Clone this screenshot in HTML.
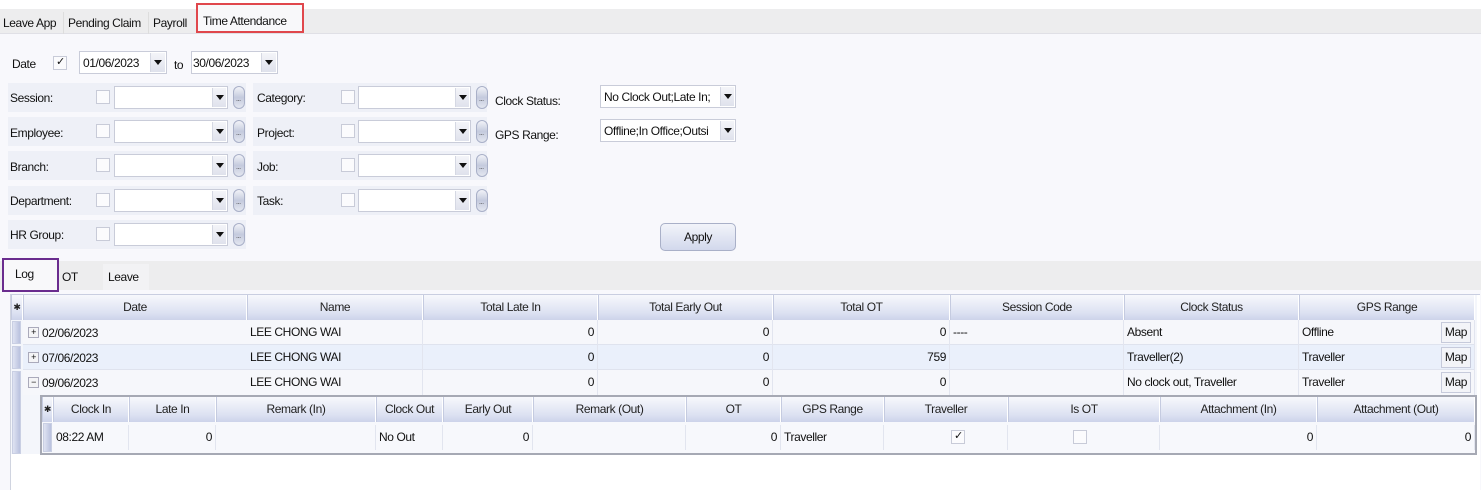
<!DOCTYPE html>
<html><head><meta charset="utf-8"><style>
*{box-sizing:border-box;margin:0;padding:0}
body{width:1481px;height:490px;background:#f8f8fc;font-family:"Liberation Sans",sans-serif;font-size:12px;color:#111;position:relative;overflow:hidden;letter-spacing:-0.4px}
.a{position:absolute;white-space:nowrap}
.band{position:absolute;background:#eef0f7}
.cb{position:absolute;width:14px;height:14px;border:1px solid #c8cbd8;background:#fbfbfd}
.combo{position:absolute;height:23px;border:1px solid #c9ccd9;background:#fff}
.arr{position:absolute;right:1px;top:1px;bottom:1px;width:14px;background:linear-gradient(#f4f5f9,#dfe2ec);border-left:1px solid #d5d8e3}
.arr:after{content:"";position:absolute;left:3px;top:7px;border-left:4px solid transparent;border-right:4px solid transparent;border-top:5px solid #111}
.ell{position:absolute;width:12px;height:23px;border:1px solid #a9b0c8;border-radius:6px;background:linear-gradient(#f2f3f8,#c4cadd 50%,#e4e7f0)}
.ell:after{content:"...";position:absolute;left:2px;top:9px;font-size:7px;color:#333}
.hd{position:absolute;height:25px;background:linear-gradient(#f7f8fc,#dde2f2 70%,#cdd3ea);border-right:1px solid #fff;border-left:1px solid #c5cbe0;text-align:center;line-height:24px;color:#222}
.c{position:absolute;height:25px;line-height:25px;border-right:1px solid #e2e5ef;padding:0 3px}
.r{text-align:right}
.ind{position:absolute;background:linear-gradient(90deg,#dfe3f2,#b9c1de);border:1px solid #c9cfe3}
.pm{position:absolute;width:11px;height:11px;border:1px solid #aab;background:#f4f4f6;font-size:9px;line-height:9px;text-align:center}
.map{position:absolute;right:3px;top:2px;height:21px;width:30px;border:1px solid #c6cadb;background:#f3f4f8;line-height:19px;text-align:center}
</style></head><body>
<div class="a" style="left:0;top:0;width:1481px;height:9px;background:#fff"></div>
<div class="a" style="left:0;top:9px;width:1481px;height:25px;background:#ededee;border-bottom:1px solid #e0e0e6"></div>
<div class="a" style="left:3px;top:16px">Leave App</div>
<div class="a" style="left:63px;top:12px;height:22px;border-left:1px solid #ddd"></div>
<div class="a" style="left:68px;top:16px">Pending Claim</div>
<div class="a" style="left:148px;top:12px;height:22px;border-left:1px solid #ddd"></div>
<div class="a" style="left:153px;top:16px">Payroll</div>
<div class="a" style="left:196px;top:3px;width:108px;height:30px;border:2px solid #e0474c;background:#f8f8fa;padding:9px 0 0 5px">Time Attendance</div>

<div class="a" style="left:12px;top:57px">Date</div>
<div class="cb" style="left:53px;top:56px"><span style="position:absolute;left:2px;top:-2px;font-size:11px">✓</span></div>
<div class="combo" style="left:79px;top:51px;width:88px;background:#fff"><span style="position:absolute;left:3px;top:4px">01/06/2023</span><div class="arr" style="width:15px"></div></div>
<div class="a" style="left:174px;top:58px">to</div>
<div class="combo" style="left:191px;top:51px;width:87px"><span style="position:absolute;left:1px;top:4px">30/06/2023</span><div class="arr" style="width:15px"></div></div>

<!-- rows -->
<div class="band" style="left:8px;top:83px;width:238px;height:29px"></div>
<div class="band" style="left:8px;top:117px;width:238px;height:29px"></div>
<div class="band" style="left:8px;top:151px;width:238px;height:29px"></div>
<div class="band" style="left:8px;top:186px;width:238px;height:29px"></div>
<div class="band" style="left:8px;top:220px;width:238px;height:29px"></div>
<div class="band" style="left:253px;top:83px;width:234px;height:29px"></div>
<div class="band" style="left:253px;top:117px;width:234px;height:29px"></div>
<div class="band" style="left:253px;top:151px;width:234px;height:29px"></div>
<div class="band" style="left:253px;top:186px;width:234px;height:29px"></div>

<div class="a" style="left:10px;top:91px">Session:</div>
<div class="a" style="left:10px;top:126px">Employee:</div>
<div class="a" style="left:10px;top:160px">Branch:</div>
<div class="a" style="left:10px;top:194px">Department:</div>
<div class="a" style="left:10px;top:228px">HR Group:</div>
<div class="a" style="left:257px;top:91px">Category:</div>
<div class="a" style="left:257px;top:126px">Project:</div>
<div class="a" style="left:257px;top:160px">Job:</div>
<div class="a" style="left:257px;top:194px">Task:</div>

<div class="cb" style="left:96px;top:90px"></div><div class="combo" style="left:114px;top:86px;width:114px"><div class="arr"></div></div><div class="ell" style="left:233px;top:86px"></div>
<div class="cb" style="left:96px;top:124px"></div><div class="combo" style="left:114px;top:120px;width:114px"><div class="arr"></div></div><div class="ell" style="left:233px;top:120px"></div>
<div class="cb" style="left:96px;top:158px"></div><div class="combo" style="left:114px;top:154px;width:114px"><div class="arr"></div></div><div class="ell" style="left:233px;top:154px"></div>
<div class="cb" style="left:96px;top:193px"></div><div class="combo" style="left:114px;top:189px;width:114px"><div class="arr"></div></div><div class="ell" style="left:233px;top:189px"></div>
<div class="cb" style="left:96px;top:227px"></div><div class="combo" style="left:114px;top:223px;width:114px"><div class="arr"></div></div><div class="ell" style="left:233px;top:223px"></div>

<div class="cb" style="left:341px;top:90px"></div><div class="combo" style="left:358px;top:86px;width:113px"><div class="arr"></div></div><div class="ell" style="left:476px;top:86px"></div>
<div class="cb" style="left:341px;top:124px"></div><div class="combo" style="left:358px;top:120px;width:113px"><div class="arr"></div></div><div class="ell" style="left:476px;top:120px"></div>
<div class="cb" style="left:341px;top:158px"></div><div class="combo" style="left:358px;top:154px;width:113px"><div class="arr"></div></div><div class="ell" style="left:476px;top:154px"></div>
<div class="cb" style="left:341px;top:193px"></div><div class="combo" style="left:358px;top:189px;width:113px"><div class="arr"></div></div><div class="ell" style="left:476px;top:189px"></div>

<div class="a" style="left:495px;top:94px">Clock Status:</div>
<div class="a" style="left:495px;top:128px">GPS Range:</div>
<div class="combo" style="left:600px;top:85px;width:136px"><span style="position:absolute;left:3px;top:4px">No Clock Out;Late In;</span><div class="arr"></div></div>
<div class="combo" style="left:600px;top:119px;width:136px"><span style="position:absolute;left:3px;top:4px">Offline;In Office;Outsi</span><div class="arr"></div></div>
<div class="a" style="left:660px;top:223px;width:76px;height:28px;border:1px solid #a9b0c8;border-radius:5px;background:linear-gradient(#f2f4fa,#d2d8ec);text-align:center;line-height:26px">Apply</div>

<!-- tabs 2 -->
<div class="a" style="left:0;top:261px;width:1481px;height:29px;background:#ededee"></div>
<div class="a" style="left:2px;top:258px;width:57px;height:34px;border:2px solid #6a2c8e;background:#f8f8fa;padding:7px 0 0 11px">Log</div>
<div class="a" style="left:62px;top:270px">OT</div>
<div class="a" style="left:103px;top:264px;width:46px;height:26px;background:#f2f2f4;padding:6px 0 0 5px">Leave</div>

<!-- grid -->
<div class="a" style="left:10px;top:294px;width:1470px;height:196px;background:#fff;border-left:1px solid #d0d4e0;border-top:1px solid #c9cee0"></div>
<div class="a" style="left:11px;top:295px;width:1466px;height:159px;background:#f4f6fb"></div>
<div class="hd" style="left:11px;top:295px;width:12px;font-size:9px">✱</div>
<div class="hd" style="left:23px;top:295px;width:224px">Date</div>
<div class="hd" style="left:247px;top:295px;width:176px">Name</div>
<div class="hd" style="left:423px;top:295px;width:175px">Total Late In</div>
<div class="hd" style="left:598px;top:295px;width:175px">Total Early Out</div>
<div class="hd" style="left:773px;top:295px;width:177px">Total OT</div>
<div class="hd" style="left:950px;top:295px;width:174px">Session Code</div>
<div class="hd" style="left:1124px;top:295px;width:175px">Clock Status</div>
<div class="hd" style="left:1299px;top:295px;width:176px">GPS Range</div>

<div class="a" style="left:23px;top:320px;width:1452px;height:25px;background:#f6f7fb;border-bottom:1px solid #dfe3ee"></div>
<div class="a" style="left:23px;top:345px;width:1452px;height:25px;background:#eaf0fb;border-bottom:1px solid #dfe3ee"></div>
<div class="a" style="left:23px;top:370px;width:1452px;height:25px;background:#f6f7fb"></div>
<div class="ind" style="left:12px;top:321px;width:9px;height:23px"></div>
<div class="ind" style="left:12px;top:346px;width:9px;height:23px"></div>
<div class="ind" style="left:12px;top:371px;width:9px;height:83px"></div>

<div class="pm" style="left:28px;top:327px">+</div><div class="a" style="left:42px;top:326px">02/06/2023</div>
<div class="pm" style="left:28px;top:352px">+</div><div class="a" style="left:42px;top:351px">07/06/2023</div>
<div class="pm" style="left:28px;top:377px">−</div><div class="a" style="left:42px;top:376px">09/06/2023</div>

<div class="c" style="left:247px;top:320px;width:176px">LEE CHONG WAI</div>
<div class="c" style="left:247px;top:345px;width:176px">LEE CHONG WAI</div>
<div class="c" style="left:247px;top:370px;width:176px">LEE CHONG WAI</div>
<div class="c r" style="left:423px;top:320px;width:175px">0</div><div class="c r" style="left:423px;top:345px;width:175px">0</div><div class="c r" style="left:423px;top:370px;width:175px">0</div>
<div class="c r" style="left:598px;top:320px;width:175px">0</div><div class="c r" style="left:598px;top:345px;width:175px">0</div><div class="c r" style="left:598px;top:370px;width:175px">0</div>
<div class="c r" style="left:773px;top:320px;width:177px">0</div><div class="c r" style="left:773px;top:345px;width:177px">759</div><div class="c r" style="left:773px;top:370px;width:177px">0</div>
<div class="c" style="left:950px;top:320px;width:174px">----</div><div class="c" style="left:950px;top:345px;width:174px"></div><div class="c" style="left:950px;top:370px;width:174px"></div>
<div class="c" style="left:1124px;top:320px;width:175px">Absent</div><div class="c" style="left:1124px;top:345px;width:175px">Traveller(2)</div><div class="c" style="left:1124px;top:370px;width:175px">No clock out, Traveller</div>
<div class="c" style="left:1299px;top:320px;width:176px">Offline<span class="map">Map</span></div>
<div class="c" style="left:1299px;top:345px;width:176px">Traveller<span class="map">Map</span></div>
<div class="c" style="left:1299px;top:370px;width:176px">Traveller<span class="map">Map</span></div>

<!-- child -->
<div class="a" style="left:40px;top:395px;width:1437px;height:60px;border:2px solid #a6a9b4;background:#f7f8fc"></div>
<div class="hd" style="left:42px;top:397px;width:11px;font-size:9px">✱</div>
<div class="hd" style="left:53px;top:397px;width:76px">Clock In</div>
<div class="hd" style="left:129px;top:397px;width:87px">Late In</div>
<div class="hd" style="left:216px;top:397px;width:160px">Remark (In)</div>
<div class="hd" style="left:376px;top:397px;width:67px">Clock Out</div>
<div class="hd" style="left:443px;top:397px;width:90px">Early Out</div>
<div class="hd" style="left:533px;top:397px;width:153px">Remark (Out)</div>
<div class="hd" style="left:686px;top:397px;width:95px">OT</div>
<div class="hd" style="left:781px;top:397px;width:103px">GPS Range</div>
<div class="hd" style="left:884px;top:397px;width:124px">Traveller</div>
<div class="hd" style="left:1008px;top:397px;width:152px">Is OT</div>
<div class="hd" style="left:1160px;top:397px;width:157px">Attachment (In)</div>
<div class="hd" style="left:1317px;top:397px;width:158px">Attachment (Out)</div>
<div class="ind" style="left:43px;top:423px;width:9px;height:29px"></div>
<div class="c" style="left:53px;top:425px;width:76px">08:22 AM</div>
<div class="c r" style="left:129px;top:425px;width:87px">0</div>
<div class="c" style="left:216px;top:425px;width:160px"></div>
<div class="c" style="left:376px;top:425px;width:67px">No Out</div>
<div class="c r" style="left:443px;top:425px;width:90px">0</div>
<div class="c" style="left:533px;top:425px;width:153px"></div>
<div class="c r" style="left:686px;top:425px;width:95px">0</div>
<div class="c" style="left:781px;top:425px;width:103px">Traveller</div>
<div class="c" style="left:884px;top:425px;width:124px"></div>
<div class="cb" style="left:951px;top:430px"><span style="position:absolute;left:2px;top:-2px;font-size:11px">✓</span></div>
<div class="c" style="left:1008px;top:425px;width:152px"></div>
<div class="cb" style="left:1073px;top:430px"></div>
<div class="c r" style="left:1160px;top:425px;width:157px">0</div>
<div class="c r" style="left:1317px;top:425px;width:158px">0</div>
</body></html>
